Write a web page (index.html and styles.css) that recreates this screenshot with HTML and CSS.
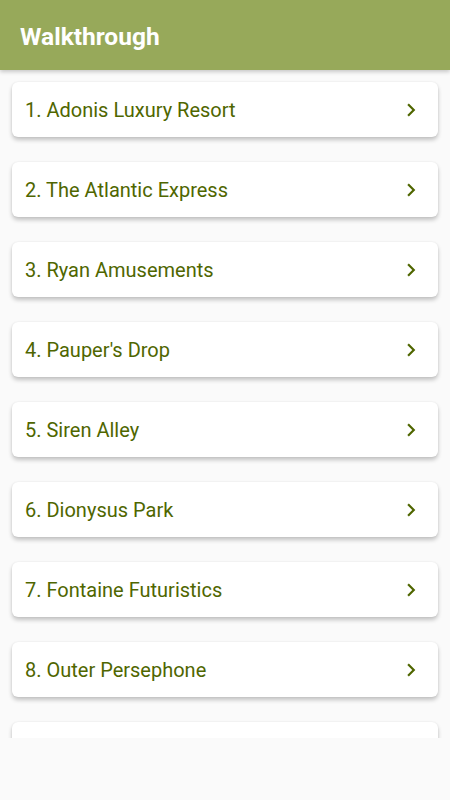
FILE: index.html
```html
<!DOCTYPE html>
<html lang="en">
<head>
    <meta charset="UTF-8">
    <title>Walkthrough</title>
    <meta name="viewport" content="width=device-width, initial-scale=1.0">
    <link rel="stylesheet" href="styles.css">
</head>
<body>

<div class="app">
    <div class="toolbar">
        <span class="toolbar-title">Walkthrough</span>
    </div>

    <div class="list">
        <div class="card">
            <span class="card-text">1. Adonis Luxury Resort</span>
            <svg class="chevron" viewBox="0 0 24 24"><path d="M10 6L8.59 7.41 13.17 12l-4.58 4.59L10 18l6-6z"/></svg>
        </div>
        <div class="card">
            <span class="card-text">2. The Atlantic Express</span>
            <svg class="chevron" viewBox="0 0 24 24"><path d="M10 6L8.59 7.41 13.17 12l-4.58 4.59L10 18l6-6z"/></svg>
        </div>
        <div class="card">
            <span class="card-text">3. Ryan Amusements</span>
            <svg class="chevron" viewBox="0 0 24 24"><path d="M10 6L8.59 7.41 13.17 12l-4.58 4.59L10 18l6-6z"/></svg>
        </div>
        <div class="card">
            <span class="card-text">4. Pauper's Drop</span>
            <svg class="chevron" viewBox="0 0 24 24"><path d="M10 6L8.59 7.41 13.17 12l-4.58 4.59L10 18l6-6z"/></svg>
        </div>
        <div class="card">
            <span class="card-text">5. Siren Alley</span>
            <svg class="chevron" viewBox="0 0 24 24"><path d="M10 6L8.59 7.41 13.17 12l-4.58 4.59L10 18l6-6z"/></svg>
        </div>
        <div class="card">
            <span class="card-text">6. Dionysus Park</span>
            <svg class="chevron" viewBox="0 0 24 24"><path d="M10 6L8.59 7.41 13.17 12l-4.58 4.59L10 18l6-6z"/></svg>
        </div>
        <div class="card">
            <span class="card-text">7. Fontaine Futuristics</span>
            <svg class="chevron" viewBox="0 0 24 24"><path d="M10 6L8.59 7.41 13.17 12l-4.58 4.59L10 18l6-6z"/></svg>
        </div>
        <div class="card">
            <span class="card-text">8. Outer Persephone</span>
            <svg class="chevron" viewBox="0 0 24 24"><path d="M10 6L8.59 7.41 13.17 12l-4.58 4.59L10 18l6-6z"/></svg>
        </div>
        <div class="card card-last">
        </div>
    </div>

    <div class="bottom-space">
    </div>
</div>

</body>
</html>
```

FILE: styles.css
```css
html, body {
    height: 100%;
    margin: 0;
    padding: 0;
}

body {
    background-color: #FAFAFA;
    font-family: Roboto, sans-serif;
}

.app {
    display: flex;
    flex-direction: column;
    height: 100%;
}

.toolbar {
    height: 70px;
    flex: none;

    display: flex;
    align-items: center;
    padding-left: 20px;

    background-color: #97A95A;
    box-shadow: 0 2px 4px rgba(0, 0, 0, 0.2);
    position: relative;
    z-index: 1;
}

.toolbar-title {
    color: white;
    font-size: 24.5px;
    font-weight: bold;
    margin-top: 3px;
}

.list {
    height: 668px;
    flex: none;
    overflow: hidden;

    display: flex;
    flex-direction: column;
    gap: 25px;
    padding: 12px 12px 0 12px;
    box-sizing: border-box;
}

.card {
    height: 55px;
    flex: none;

    display: flex;
    align-items: center;
    justify-content: space-between;
    padding: 0 14px 0 13px;

    background-color: white;
    border-radius: 6px;
    box-shadow: 0 3px 4px rgba(0, 0, 0, 0.22), 0 0 2px rgba(0, 0, 0, 0.08);
}

.card-text {
    color: #4F6600;
    font-size: 20px;
    margin-top: 1px;
}

.chevron {
    width: 26px;
    height: 26px;
    fill: #4F6600;
}

.bottom-space {
    flex: 1;
}
```
